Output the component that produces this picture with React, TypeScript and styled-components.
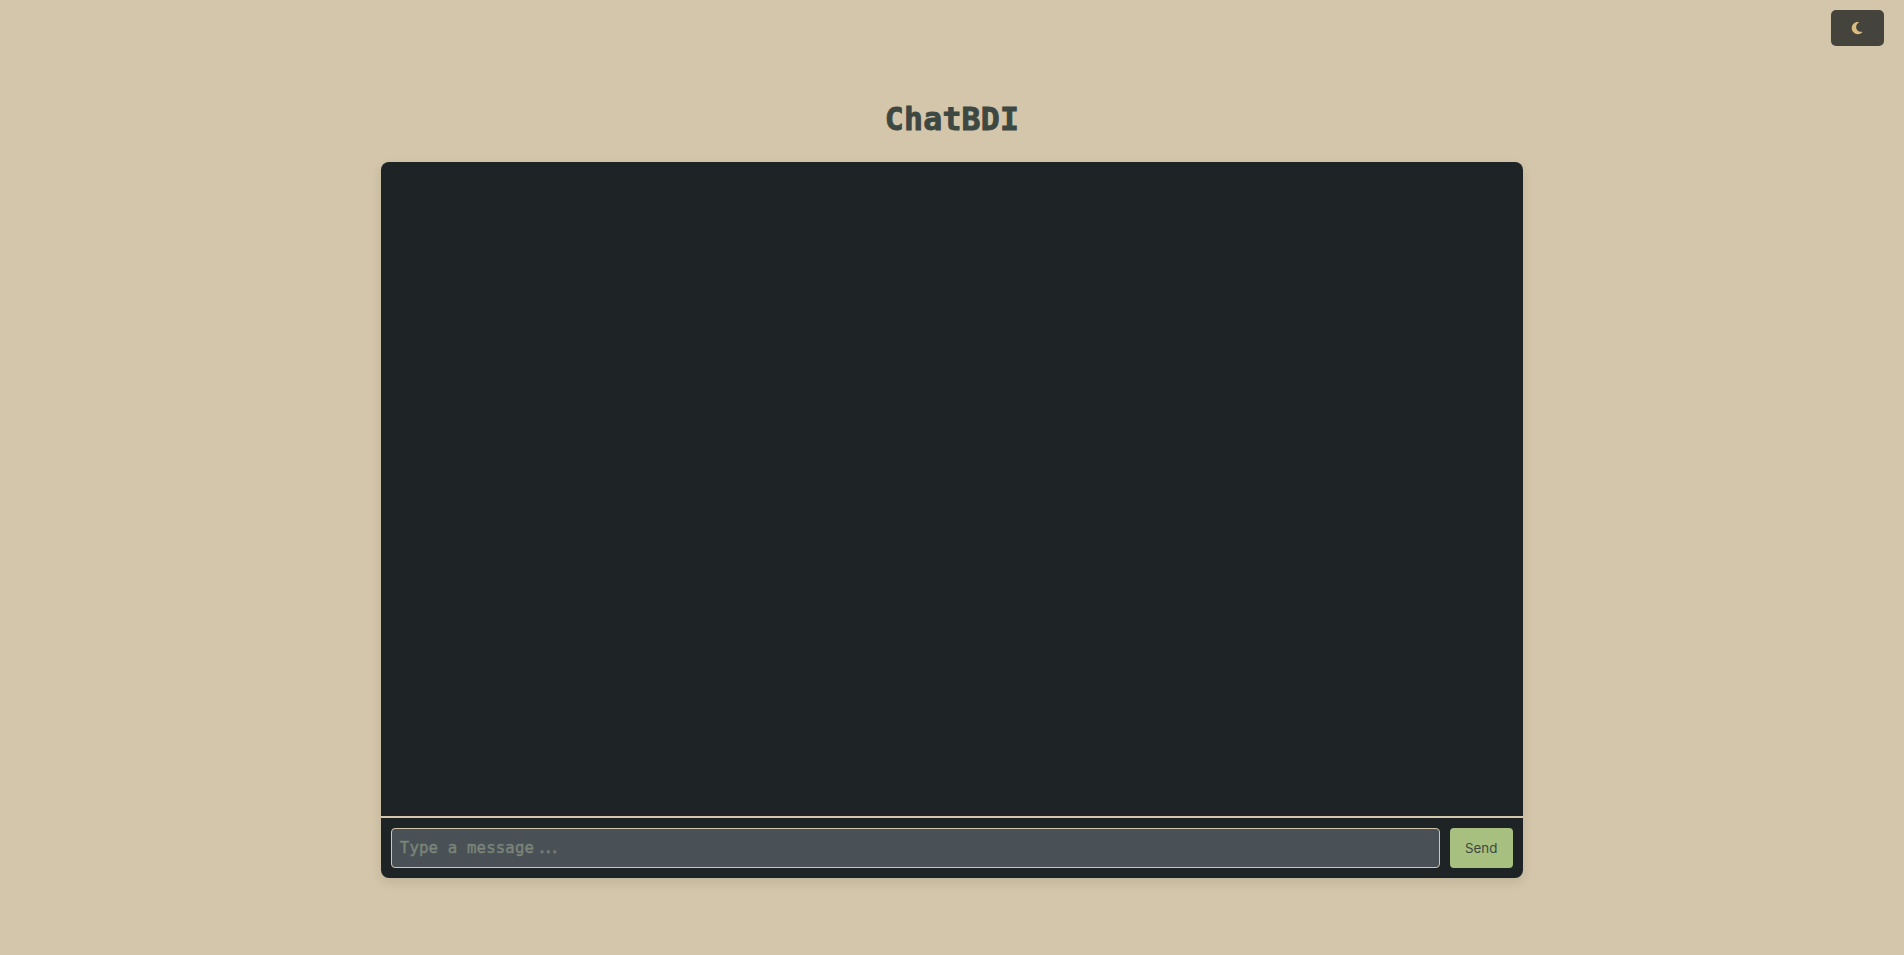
import { useState } from "react";
import styled, { createGlobalStyle } from "styled-components";
import { FaMoon } from "react-icons/fa6";

const GlobalStyle = createGlobalStyle`
  *, *::before, *::after { box-sizing: border-box; }
  body {
    margin: 0;
    background: #d3c6aa;
    font-family: Inter, "Liberation Sans", sans-serif;
  }
`;

const Page = styled.div`
  height: 100vh;
  display: flex;
  flex-direction: column;
  align-items: center;
  overflow: hidden;
`;

const TopBar = styled.header`
  align-self: stretch;
  display: flex;
  justify-content: flex-end;
  padding: 10px 20px 0 0;
`;

const ThemeToggle = styled.button`
  display: flex;
  align-items: center;
  justify-content: center;
  width: 53px;
  height: 36px;
  padding: 0 1px 0 0;
  border: none;
  border-radius: 5px;
  background: #45443c;
  color: #dbbc7f;
  font-size: 14px;
`;

const Title = styled.h1`
  margin: 52px 0 21px;
  height: 43px;
  line-height: 43px;
  font-family: "DejaVu Sans Mono", monospace;
  font-size: 31.5px;
  font-weight: 700;
  letter-spacing: 0.24px;
  -webkit-text-stroke: 0.9px #3c4841;
  color: #3c4841;
`;

const ChatPanel = styled.main`
  display: flex;
  flex-direction: column;
  width: 60vw;
  height: 75vh;
  overflow: hidden;
  border-radius: 8px;
  background: #1e2326;
  box-shadow: 0 4px 12px rgba(0, 0, 0, 0.1);
`;

const Messages = styled.div`
  flex: 1;
`;

const Composer = styled.form`
  display: flex;
  gap: 10px;
  padding: 10px;
  border-top: 2px solid #d3c6aa;
`;

const Field = styled.div`
  position: relative;
  flex: 1;
  min-width: 0;
  height: 40px;
  font-family: "DejaVu Sans Mono", monospace;
  font-size: 15.7px;
  letter-spacing: 0.15px;
`;

const MessageInput = styled.input`
  display: block;
  width: 100%;
  height: 100%;
  padding: 0 8px;
  border: 1px solid #d3c6aa;
  border-radius: 4px;
  outline: none;
  background: #495156;
  color: #d3c6aa;
  font: inherit;
  letter-spacing: inherit;
`;

const Hint = styled.span`
  position: absolute;
  left: 9px;
  top: 0;
  line-height: 39px;
  color: #7a8478;
  -webkit-text-stroke: 0.45px #7a8478;
  white-space: pre;
  pointer-events: none;
`;

const Ellipsis = styled.span`
  margin-left: 3px;
  letter-spacing: -3px;
`;

const SendButton = styled.button`
  width: 63px;
  height: 40px;
  padding: 0 1px 0 0;
  border: none;
  border-radius: 4px;
  background: #a7c080;
  color: #3c4841;
  font-family: Inter, sans-serif;
  font-size: 13.333px;
`;

export default function App() {
  const [message, setMessage] = useState("");
  return (
    <Page>
      <GlobalStyle />
      <TopBar>
        <ThemeToggle aria-label="Toggle theme"><FaMoon /></ThemeToggle>
      </TopBar>
      <Title>ChatBDI</Title>
      <ChatPanel>
        <Messages />
        <Composer onSubmit={(e) => { e.preventDefault(); setMessage(""); }}>
          <Field>
            <MessageInput
              aria-label="Message"
              value={message}
              onChange={(e) => setMessage(e.target.value)}
            />
            {message === "" && <Hint>Type a message<Ellipsis>...</Ellipsis></Hint>}
          </Field>
          <SendButton type="submit">Send</SendButton>
        </Composer>
      </ChatPanel>
    </Page>
  );
}
